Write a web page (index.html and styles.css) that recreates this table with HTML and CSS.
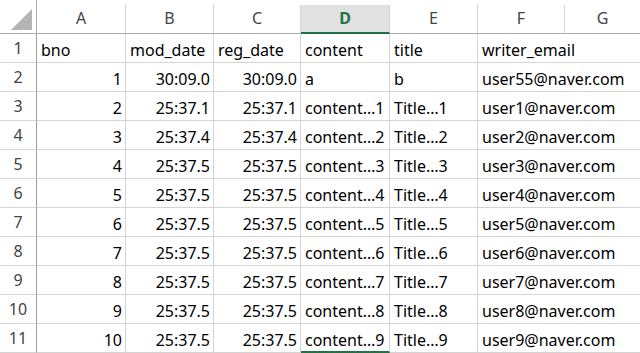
FILE: index.html
```html
<!DOCTYPE html>
<html>
<head>
<meta charset="utf-8">
<link rel="stylesheet" href="styles.css">
</head>
<body>
<div class="sheet">
  <div class="corner"><svg class="tri" width="22" height="22" viewBox="0 0 22 22"><polygon points="21,0 21,21 0,21" fill="#b4b4b4"/></svg></div>
  <div class="ch">A</div>
  <div class="ch">B</div>
  <div class="ch">C</div>
  <div class="ch sel">D</div>
  <div class="ch">E</div>
  <div class="ch">F</div>
  <div class="ch last">G</div>

  <div class="rh">1</div>
  <div class="c">bno</div><div class="c">mod_date</div><div class="c">reg_date</div><div class="c">content</div><div class="c">title</div><div class="c wide">writer_email</div>

  <div class="rh">2</div>
  <div class="c n">1</div><div class="c n">30:09.0</div><div class="c n">30:09.0</div><div class="c">a</div><div class="c">b</div><div class="c wide">user55@naver.com</div>

  <div class="rh">3</div>
  <div class="c n">2</div><div class="c n">25:37.1</div><div class="c n">25:37.1</div><div class="c">content…1</div><div class="c">Title…1</div><div class="c wide">user1@naver.com</div>

  <div class="rh">4</div>
  <div class="c n">3</div><div class="c n">25:37.4</div><div class="c n">25:37.4</div><div class="c">content…2</div><div class="c">Title…2</div><div class="c wide">user2@naver.com</div>

  <div class="rh">5</div>
  <div class="c n">4</div><div class="c n">25:37.5</div><div class="c n">25:37.5</div><div class="c">content…3</div><div class="c">Title…3</div><div class="c wide">user3@naver.com</div>

  <div class="rh">6</div>
  <div class="c n">5</div><div class="c n">25:37.5</div><div class="c n">25:37.5</div><div class="c">content…4</div><div class="c">Title…4</div><div class="c wide">user4@naver.com</div>

  <div class="rh">7</div>
  <div class="c n">6</div><div class="c n">25:37.5</div><div class="c n">25:37.5</div><div class="c">content…5</div><div class="c">Title…5</div><div class="c wide">user5@naver.com</div>

  <div class="rh">8</div>
  <div class="c n">7</div><div class="c n">25:37.5</div><div class="c n">25:37.5</div><div class="c">content…6</div><div class="c">Title…6</div><div class="c wide">user6@naver.com</div>

  <div class="rh">9</div>
  <div class="c n">8</div><div class="c n">25:37.5</div><div class="c n">25:37.5</div><div class="c">content…7</div><div class="c">Title…7</div><div class="c wide">user7@naver.com</div>

  <div class="rh">10</div>
  <div class="c n">9</div><div class="c n">25:37.5</div><div class="c n">25:37.5</div><div class="c">content…8</div><div class="c">Title…8</div><div class="c wide">user8@naver.com</div>

  <div class="rh">11</div>
  <div class="c n">10</div><div class="c n">25:37.5</div><div class="c n">25:37.5</div><div class="c lastsel">content…9</div><div class="c">Title…9</div><div class="c wide">user9@naver.com</div>
</div>
</body>
</html>
```
FILE: styles.css
```css
* { box-sizing: border-box; }
html, body { margin: 0; padding: 0; background: #fff; overflow: hidden; }
body { width: 640px; height: 353px; }

.sheet {
  display: grid;
  grid-template-columns: 37px 89px 88px 87px 89px 88px 87px 75px;
  grid-template-rows: 34px repeat(11, 29px);
  font-family: "Noto Sans", "Open Sans", sans-serif;
  color: #000;
}

.corner {
  border-right: 1px solid #ababab;
  border-bottom: 1px solid #ababab;
  display: flex;
  align-items: flex-end;
  justify-content: flex-end;
  padding: 0 3px 2px 0;
}
.tri { display: block; }

.ch {
  margin-top: 5px;
  border-right: 1px solid #d4d4d4;
  border-bottom: 1px solid #ababab;
  display: flex;
  align-items: center;
  justify-content: center;
  font-size: 16px;
  color: #444;
  padding-bottom: 2px;
}
.ch.last { border-right: none; }
.ch.sel {
  background: #e1e1e1;
  color: #217346;
  font-weight: bold;
  border-bottom: 2px solid #217346;
  padding-bottom: 1px;
}

.rh {
  border-right: 1px solid #9e9e9e;
  border-bottom: 1px solid #d4d4d4;
  display: flex;
  align-items: center;
  justify-content: center;
  font-size: 16px;
  color: #444;
}

.c {
  border-right: 1px solid #d4d4d4;
  border-bottom: 1px solid #d4d4d4;
  font-size: 16px;
  line-height: 20px;
  padding: 0 3px 2px 4px;
  display: flex;
  align-items: flex-end;
  white-space: nowrap;
  overflow: hidden;
}
.c.n { justify-content: flex-end; }
.c.wide { grid-column: span 2; border-right: none; }
.c.lastsel { border-bottom: 2px solid #217346; padding-bottom: 1px; }
```
